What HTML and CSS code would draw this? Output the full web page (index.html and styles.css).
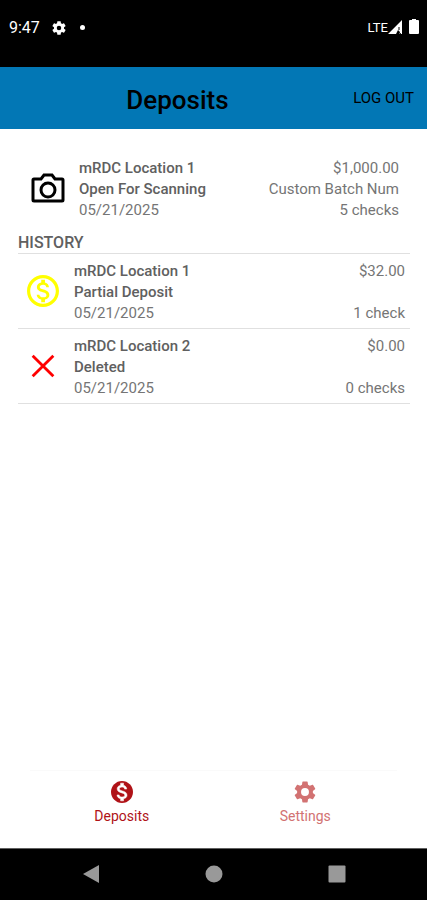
FILE: index.html
```html
<!DOCTYPE html>
<html lang="en">
<head>
    <meta charset="UTF-8">
    <meta name="viewport" content="width=device-width, initial-scale=1.0">
    <title>Deposits</title>
    <link rel="stylesheet" href="styles.css">
</head>
<body>
    <!-- Status bar -->
    <div class="status-bar">
        <div class="status-left">
            <span>9:47</span>
            <svg class="status-gear" viewBox="2 2 20 20"><path d="M19.14 12.94c.04-.3.06-.61.06-.94 0-.32-.02-.64-.07-.94l2.03-1.58c.18-.14.23-.41.12-.61l-1.92-3.32c-.12-.22-.37-.29-.59-.22l-2.39.96c-.5-.38-1.03-.7-1.62-.94l-.36-2.54c-.04-.24-.24-.41-.48-.41h-3.84c-.24 0-.43.17-.47.41l-.36 2.54c-.59.24-1.13.57-1.62.94l-2.39-.96c-.22-.08-.47 0-.59.22L2.74 8.87c-.12.21-.08.47.12.61l2.03 1.58c-.05.3-.09.63-.09.94s.02.64.07.94l-2.03 1.58c-.18.14-.23.41-.12.61l1.92 3.32c.12.22.37.29.59.22l2.39-.96c.5.38 1.03.7 1.62.94l.36 2.54c.05.24.24.41.48.41h3.84c.24 0 .44-.17.47-.41l.36-2.54c.59-.24 1.13-.56 1.62-.94l2.39.96c.22.08.47 0 .59-.22l1.92-3.32c.12-.22.07-.47-.12-.61l-2.01-1.58zM12 15.2a3.2 3.2 0 1 1 0-6.4 3.2 3.2 0 0 1 0 6.4z"/></svg>
            <span class="status-dot"></span>
        </div>
        <div class="status-right">
            <span class="status-network">LTE</span>
            <svg class="status-signal" viewBox="0 0 15 15"><path d="M0 14 14 0v14h-3l1-2-2-2-2 4z"/><path d="M11 7v3M10 12l3 2" fill="none" stroke="#000" stroke-width="1"/></svg>
            <svg class="status-battery" viewBox="0 0 10 15"><path d="M3 0h4v1h2q1 0 1 1v12q0 1-1 1H1q-1 0-1-1V2q0-1 1-1h2z"/></svg>
        </div>
    </div>

    <header class="header">
        <h1 class="header-title">Deposits</h1>
        <button class="logout-button" type="button">LOG OUT</button>
    </header>

    <main class="content">
        <!-- Open deposit -->
        <section class="deposit open-deposit">
            <svg class="deposit-icon" viewBox="0 0 34 30" fill="none" stroke="#000" stroke-width="3"><path d="M3 6h7l3-4h8l3 4h7q1 0 1 1v20q0 1-1 1H3q-1 0-1-1V7q0-1 1-1z"/><circle cx="17" cy="17" r="7"/></svg>
            <div class="deposit-info">
                <strong>mRDC Location 1</strong>
                <strong>Open For Scanning</strong>
                <span>05/21/2025</span>
            </div>
            <div class="deposit-totals">
                <span>$1,000.00</span>
                <span>Custom Batch Num</span>
                <span>5 checks</span>
            </div>
        </section>

        <!-- History -->
        <h2 class="history-title">HISTORY</h2>
        <ul class="history">
            <li class="deposit">
                <svg class="deposit-icon" viewBox="2 2 20 20" fill="#ff0"><path d="M12 2C6.48 2 2 6.48 2 12s4.48 10 10 10 10-4.48 10-10S17.52 2 12 2zm0 18c-4.41 0-8-3.59-8-8s3.59-8 8-8 8 3.59 8 8-3.59 8-8 8zm.31-8.86c-1.77-.45-2.34-.94-2.34-1.67 0-.84.79-1.43 2.1-1.43 1.38 0 1.9.66 1.94 1.64h1.71c-.05-1.34-.87-2.57-2.49-2.97V5H10.9v1.69c-1.51.32-2.72 1.3-2.72 2.81 0 1.79 1.49 2.69 3.66 3.21 1.95.46 2.34 1.15 2.34 1.87 0 .53-.39 1.39-2.1 1.39-1.6 0-2.23-.72-2.32-1.64H8.04c.1 1.7 1.36 2.66 2.86 2.97V19h2.34v-1.67c1.52-.29 2.72-1.16 2.73-2.77-.01-2.2-1.9-2.96-3.66-3.42z"/></svg>
                <div class="deposit-info">
                    <strong>mRDC Location 1</strong>
                    <strong>Partial Deposit</strong>
                    <span>05/21/2025</span>
                </div>
                <div class="deposit-totals">
                    <span>$32.00</span>
                    <span>1 check</span>
                </div>
            </li>
            <li class="deposit">
                <svg class="deposit-icon" viewBox="0 0 34 34" fill="none" stroke="#f00" stroke-width="3"><path d="M6 6l22 22M28 6 6 28"/></svg>
                <div class="deposit-info">
                    <strong>mRDC Location 2</strong>
                    <strong>Deleted</strong>
                    <span>05/21/2025</span>
                </div>
                <div class="deposit-totals">
                    <span>$0.00</span>
                    <span>0 checks</span>
                </div>
            </li>
        </ul>
    </main>

    <nav class="tab-bar">
        <a class="tab active" href="#deposits">
            <svg class="tab-icon" viewBox="2 2 20 20"><path d="M12 2C6.48 2 2 6.48 2 12s4.48 10 10 10 10-4.48 10-10S17.52 2 12 2z"/><path transform="translate(12 12) scale(1.15) translate(-12 -12)" fill="#fff" stroke="#fff" stroke-width=".4" d="M12.31 11.14c-1.77-.45-2.34-.94-2.34-1.67 0-.84.79-1.43 2.1-1.43 1.38 0 1.9.66 1.94 1.64h1.71c-.05-1.34-.87-2.57-2.49-2.97V5H10.9v1.69c-1.51.32-2.72 1.3-2.72 2.81 0 1.79 1.49 2.69 3.66 3.21 1.95.46 2.34 1.15 2.34 1.87 0 .53-.39 1.39-2.1 1.39-1.6 0-2.23-.72-2.32-1.64H8.04c.1 1.7 1.36 2.66 2.86 2.97V19h2.34v-1.67c1.52-.29 2.72-1.16 2.73-2.77-.01-2.2-1.9-2.96-3.66-3.42z"/></svg>
            <span>Deposits</span>
        </a>
        <a class="tab" href="#settings">
            <svg class="tab-icon" viewBox="2 2 20 20"><path d="M19.14 12.94c.04-.3.06-.61.06-.94 0-.32-.02-.64-.07-.94l2.03-1.58c.18-.14.23-.41.12-.61l-1.92-3.32c-.12-.22-.37-.29-.59-.22l-2.39.96c-.5-.38-1.03-.7-1.62-.94l-.36-2.54c-.04-.24-.24-.41-.48-.41h-3.84c-.24 0-.43.17-.47.41l-.36 2.54c-.59.24-1.13.57-1.62.94l-2.39-.96c-.22-.08-.47 0-.59.22L2.74 8.87c-.12.21-.08.47.12.61l2.03 1.58c-.05.3-.09.63-.09.94s.02.64.07.94l-2.03 1.58c-.18.14-.23.41-.12.61l1.92 3.32c.12.22.37.29.59.22l2.39-.96c.5.38 1.03.7 1.62.94l.36 2.54c.05.24.24.41.48.41h3.84c.24 0 .44-.17.47-.41l.36-2.54c.59-.24 1.13-.56 1.62-.94l2.39.96c.22.08.47 0 .59-.22l1.92-3.32c.12-.22.07-.47-.12-.61l-2.01-1.58zM12 15.6a3.6 3.6 0 1 1 0-7.2 3.6 3.6 0 0 1 0 7.2z"/></svg>
            <span>Settings</span>
        </a>
    </nav>

    <!-- System buttons -->
    <div class="system-nav">
        <button type="button" aria-label="Back"><svg viewBox="0 0 18 18"><path d="M1 9 17 0v18z"/></svg></button>
        <button type="button" aria-label="Home"><svg viewBox="0 0 18 18"><circle cx="9" cy="9" r="8.5"/></svg></button>
        <button type="button" aria-label="Recent apps"><svg viewBox="0 0 18 18"><rect x=".5" y=".5" width="17" height="17" rx="1"/></svg></button>
    </div>
</body>
</html>
```
FILE: styles.css
```css
* {
    box-sizing: border-box;
}

body {
    margin: 0;
    min-height: 100vh;
    display: flex;
    flex-direction: column;
    background-color: #fff;
    color: #757575;
    font-family: Roboto, "Liberation Sans", sans-serif;
    font-size: 15px;
    line-height: 21px;
}

button {
    padding: 0;
    border: none;
    background: none;
    font-family: inherit;
    cursor: pointer;
}

/* Status bar */
.status-bar {
    display: flex;
    justify-content: space-between;
    padding: 17px 8px 29px 9px;
    background-color: #000;
    color: #fff;
    font-size: 16px;
}

.status-bar svg {
    fill: #fff;
}

.status-left,
.status-right {
    display: flex;
    align-items: center;
}

.status-gear {
    width: 14px;
    height: 14px;
    margin-left: 12px;
}

.status-dot {
    width: 5px;
    height: 5px;
    margin-left: 14px;
    border-radius: 50%;
    background-color: #fff;
}

.status-network {
    font-size: 13px;
}

.status-signal {
    width: 15px;
    height: 15px;
}

.status-battery {
    width: 10px;
    height: 15px;
    margin: 0 0 2px 6px;
}

/* Header */
.header {
    display: grid;
    grid-template-columns: 1fr auto 1fr;
    align-items: center;
    height: 62px;
    padding: 0 13px;
    background-color: #0277b5;
    color: #000;
}

.header-title {
    grid-column: 2;
    margin: 0 72px 0 0;
    padding-top: 3px;
    font-size: 26px;
    font-weight: 500;
    line-height: 28px;
}

.logout-button {
    justify-self: end;
    color: #000;
    font-size: 15px;
}

/* Deposits */
.content {
    flex: 1;
    padding: 29px 17px 0 18px;
}

.deposit {
    display: flex;
    align-items: center;
    gap: 14px;
    padding: 7px 5px 4px 8px;
    border-bottom: 1px solid #e0e0e0;
}

.open-deposit {
    padding: 0 11px 0 13px;
    border: none;
}

.deposit-icon {
    flex: none;
    width: 34px;
    height: 32px;
    margin-bottom: 4px;
}

.deposit-info,
.deposit-totals {
    display: flex;
    flex-direction: column;
}

.deposit-info strong {
    color: #606060;
    font-weight: 500;
}

.deposit-totals {
    align-self: stretch;
    justify-content: space-between;
    margin-left: auto;
    text-align: right;
}

.history-title {
    margin: 12px 0 0;
    color: #606060;
    font-size: 16px;
    font-weight: 500;
    line-height: 20px;
}

.history {
    margin: 0;
    padding: 0;
    border-top: 1px solid #e0e0e0;
    list-style: none;
}

/* Tab bar */
.tab-bar {
    display: flex;
    margin: 0 30px;
    padding: 10px 0 23px;
    border-top: 1px solid #fafafa;
}

.tab {
    flex: 1;
    display: flex;
    flex-direction: column;
    align-items: center;
    gap: 4px;
    color: #d27272;
    font-size: 14px;
    line-height: 18px;
    text-decoration: none;
}

.tab.active {
    color: #b01217;
}

.tab-icon {
    width: 22px;
    height: 22px;
    fill: currentColor;
}

/* System buttons */
.system-nav {
    display: flex;
    justify-content: center;
    gap: 105px;
    padding: 16px 0 17px;
    border-top: 1px solid #606060;
    background-color: #000;
}

.system-nav svg {
    display: block;
    width: 18px;
    height: 18px;
    fill: #999;
}
```
